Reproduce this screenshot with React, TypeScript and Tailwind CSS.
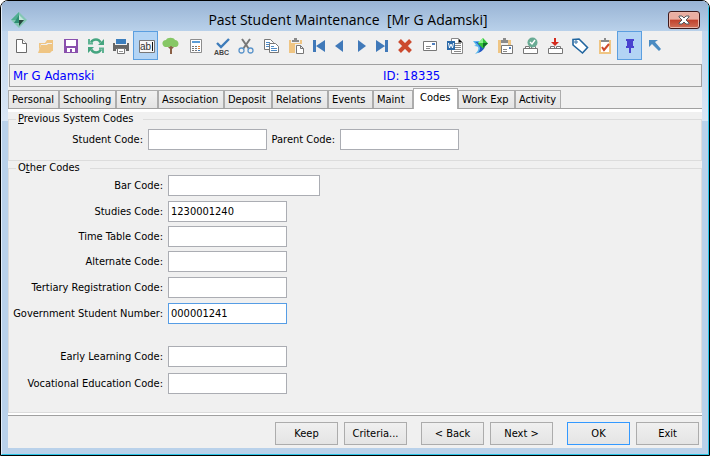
import { useState } from 'react'
import type { ReactNode } from 'react'
import clsx from 'clsx'

interface Tool {
  name: string
  icon: ReactNode
  narrow?: boolean
  pressed?: boolean
}

const TOOLS: Tool[] = [
  {
    name: 'New',
    icon: (
      <g fill="#fff" stroke="#6a6a6a">
        <path d="M8.5 8.5h6l4 4v9h-10z" />
        <path d="M14.5 8.5v4h4" />
      </g>
    ),
  },
  {
    name: 'Open',
    icon: (
      <g fill="#efc583">
        <path d="M6 20V12h6l2-3h6v11h-1v-8h-5l-1 1H8z" />
        <path d="M5 22l3-8h6l1-1h4v7l-2 2z" />
      </g>
    ),
  },
  {
    name: 'Save',
    icon: (
      <g>
        <path fill="#8a50ad" d="M6 8h14v14H6z" />
        <path fill="#fff" d="M8 9h10v6H8zM9 17h8v4h-3v-3h-2v3H9z" />
      </g>
    ),
  },
  {
    name: 'Refresh',
    icon: (
      <g fill="none" stroke="#45a580" strokeWidth="2.4">
        <path d="M8 11.500c2-4 8-4 9.500 0" />
        <path d="M18 18.500c-2 4-8 4-9.500 0" />
        <path fill="#45a580" stroke="none" d="M21 8v6h-6zM5 22v-6h6z" />
        <path stroke="#5fb393" strokeWidth="2" d="M6 8v4.500h4M20 22v-4.500h-4" />
      </g>
    ),
  },
  {
    name: 'Print',
    icon: (
      <g>
        <path fill="#3c7ebd" d="M8 8h10v5H8z" />
        <path fill="#666" d="M5 12h2v2h12v-2h2v8h-3v-2H8v2H5z" />
        <path fill="#fff" stroke="#777" d="M9.5 17.5h7v5h-7z" />
        <path stroke="#999" d="M11 20.500h4" />
      </g>
    ),
  },
  {
    name: 'Edit text',
    pressed: true,
    icon: (
      <g>
        <path fill="#f8f8f8" stroke="#777" d="M6.500 9.500h15v12h-15z" />
        <text x="7" y="19" fontSize="10" fill="#333">ab</text>
        <path stroke="#111" d="M19.500 11v9" />
      </g>
    ),
  },
  {
    name: 'Family tree',
    icon: (
      <g>
        <path fill="#8a6046" d="M12 23v-5l-3-3 1-1 2 2v-3h2v3l2-2 1 1-3 3v5z" />
        <path fill="#86c765" d="M8 9c1-3 8-3 9 0 4 0 5 6 1 7h-3l-2-1-2 1H7c-4-2-3-7 1-7z" />
      </g>
    ),
  },
  {
    name: 'Calculator',
    icon: (
      <g>
        <path fill="#fff" stroke="#8d8d8d" d="M7.500 8.500h11v13h-11z" />
        <path fill="#5d9dd5" d="M9 10h8v2H9z" />
        <path fill="#777" d="M9 15h2v1H9zM12 15h2v1h-2zM9 17h2v1H9zM12 17h2v1h-2zM9 19h2v1H9zM12 19h2v1h-2z" />
        <path fill="#e07f2e" d="M15 15h2v1h-2zM15 17h2v1h-2z" />
        <path fill="#4079b9" d="M15 19h2v1h-2z" />
      </g>
    ),
  },
  {
    name: 'Spelling',
    icon: (
      <g>
        <path fill="none" stroke="#3e7cba" strokeWidth="2.400" d="M9 12l4 4 8-8" />
        <text x="6" y="24" fontSize="7" fontWeight="700" fill="#444">ABC</text>
      </g>
    ),
  },
  {
    name: 'Cut',
    icon: (
      <g fill="none">
        <path stroke="#777" strokeWidth="2" d="M9 8l7 10M17 8l-7 10" />
        <circle cx="8.500" cy="19.500" r="2.500" stroke="#5c95cb" strokeWidth="1.300" />
        <circle cx="17.500" cy="19.500" r="2.500" stroke="#5c95cb" strokeWidth="1.300" />
      </g>
    ),
  },
  {
    name: 'Copy',
    icon: (
      <g fill="#fff">
        <path stroke="#777" d="M6.500 8.500h6l3 3v7h-9z" />
        <path stroke="#4f8bc5" d="M8 11.500h4M8 13.500h3M8 15.500h3" />
        <path stroke="#777" d="M11.500 12.500h6l3 3v6h-9z" />
        <path stroke="#4f8bc5" d="M13 15.500h3M13 17.500h6M13 19.500h6" />
      </g>
    ),
  },
  {
    name: 'Paste',
    icon: (
      <g>
        <path fill="#efc583" d="M6 9h13v13H6z" />
        <path fill="#f0f0f0" d="M8 8h9v4H8z" />
        <path fill="#8a8a8a" d="M9 9h2V7h3v2h2v2H9z" />
        <path fill="#f0f0f0" d="M12 13h8v10h-8z" />
        <path fill="#fff" stroke="#777" d="M13.500 14.500h4l3 3v5h-7zM17.500 14.500v3h3" />
      </g>
    ),
  },
  {
    name: 'First',
    narrow: true,
    icon: <path fill="#4079b9" d="M5 9h3v12H5zM17 9v12l-9-6z" />,
  },
  {
    name: 'Previous',
    narrow: true,
    icon: <path fill="#4079b9" d="M14 9v12l-8-6z" />,
  },
  {
    name: 'Next',
    narrow: true,
    icon: <path fill="#4079b9" d="M8 9v12l8-6z" />,
  },
  {
    name: 'Last',
    narrow: true,
    icon: <path fill="#4079b9" d="M14 9h3v12h-3zM5 9v12l9-6z" />,
  },
  {
    name: 'Delete',
    icon: <path fill="none" stroke="#cc4a2e" strokeWidth="4" d="M7.500 9.500l11 11M18.500 9.500l-11 11" />,
  },
  {
    name: 'Mail',
    icon: (
      <g>
        <path fill="#fff" stroke="#777" d="M6.500 10.500h13v9h-13z" />
        <path fill="#4f7fc0" d="M15 12h3v2h-3z" />
        <path stroke="#888" d="M9 15.500h5M9 17.500h4" />
      </g>
    ),
  },
  {
    name: 'Word document',
    icon: (
      <g>
        <path fill="#fff" stroke="#888" d="M9.500 7.500h7l4 4v11h-11z" />
        <path stroke="#888" d="M13 12.500h6M13 14.500h6M13 16.500h6M13 18.500h6M12 20.500h7M16.500 8v3.500h4" />
        <path fill="#2a69a8" d="M5 10h8v9H5z" />
        <path fill="none" stroke="#fff" d="M6.500 12l1 5 1.500-4 1.500 4 1-5" />
      </g>
    ),
  },
  {
    name: 'Synchronise',
    icon: (
      <g>
        <path fill="#5ab8ec" d="M6 10l6 0 4 6c0 3-4 6-8 7 3-3 4-5 3-7-1-1-3-1-4-1l2-1z" />
        <path fill="#2459c4" d="M8 11c4 0 6 1 8 5l2-1c0 3-4 6-7 7 2-3 3-5 1-7-1-2-2-3-4-4z" />
        <path fill="#35c53b" d="M16 7l5 5.500-5 5-5-5z" />
        <path fill="#8cf08d" d="M16 7v5h-5z" />
        <path fill="#126b2c" d="M16 12h5l-5 5z" />
      </g>
    ),
  },
  {
    name: 'Clipboard mail',
    icon: (
      <g>
        <path fill="#efc583" d="M6 9h3v11h1v2H6zM16 9h3v5h-3z" />
        <path fill="#8a8a8a" d="M9 9h2V7h3v2h2v3H9z" />
        <path fill="#fff" stroke="#777" d="M9.500 14.500h11v8h-11z" />
        <path stroke="#888" d="M11 18.500h4M11 20.500h4" />
        <path fill="#4f7fc0" d="M17 16h2v2h-2z" />
      </g>
    ),
  },
  {
    name: 'Approve',
    icon: (
      <g>
        <path fill="#fff" stroke="#777" d="M6.500 17.500h14v5h-14zM8.500 17.500v-2h4v2M14.500 17.500v-2h4v2" />
        <circle cx="15.500" cy="11.500" r="5" fill="#69ab94" />
        <path fill="none" stroke="#fff" strokeWidth="1.400" d="M13 11l2 2 3-4" />
      </g>
    ),
  },
  {
    name: 'Receive',
    icon: (
      <g>
        <path fill="#fff" stroke="#777" d="M6.500 17.500h14v5h-14zM8.500 17.500v-2h4v2M14.500 17.500v-2h4v2" />
        <path fill="#d42a1c" d="M12 7h2v4h3l-4 4-4-4h3z" />
      </g>
    ),
  },
  {
    name: 'Tag',
    icon: (
      <g>
        <path fill="#fff" stroke="#20659f" strokeWidth="1.600" d="M6 8.500l6-.5 8.500 8.500-5 5.500L6 14z" />
        <circle cx="9" cy="11" r="1.200" fill="none" stroke="#20659f" />
      </g>
    ),
  },
  {
    name: 'Tasks',
    icon: (
      <g>
        <path fill="#efc583" d="M7 9h12v14H7z" />
        <path fill="#fff" d="M9 10h8v11H9z" />
        <path fill="#8a8a8a" d="M9 9h3V7h2v2h3v2H9z" />
        <path fill="none" stroke="#cf4a2c" strokeWidth="2" d="M10 16l2 3 5-6" />
      </g>
    ),
  },
  {
    name: 'Pin',
    pressed: true,
    icon: <path fill="#4a43cf" d="M9 8h8v2h-1v5h1v2h-3v5h-2v-5H9v-2h1v-5H9z" />,
  },
  {
    name: 'Pointer',
    icon: <path fill="#4a8bc2" d="M7 9h9l-3 2 6 7-2 2-7-7-3 3z" />,
  },
]

const TABS = [
  { label: 'Personal', width: 'w-[51px]' },
  { label: 'Schooling', width: 'w-[57px]' },
  { label: 'Entry', width: 'w-[42px]' },
  { label: 'Association', width: 'w-[66px]' },
  { label: 'Deposit', width: 'w-[48px]' },
  { label: 'Relations', width: 'w-[56px]' },
  { label: 'Events', width: 'w-[45px]' },
  { label: 'Maint', width: 'w-[40px]' },
  { label: 'Codes', width: 'w-[45px]' },
  { label: 'Work Exp', width: 'w-[57px]' },
  { label: 'Activity', width: 'w-[46px]' },
]

const OTHER_CODES = [
  { id: 'bar', label: 'Bar Code:', value: '', input: 'w-[152px]', row: '' },
  { id: 'studies', label: 'Studies Code:', value: '1230001240', input: 'w-[119px]', row: 'mt-[5px]' },
  { id: 'timetable', label: 'Time Table Code:', value: '', input: 'w-[119px]', row: 'mt-1' },
  { id: 'alternate', label: 'Alternate Code:', value: '', input: 'w-[119px]', row: 'mt-1' },
  { id: 'tertiary', label: 'Tertiary Registration Code:', value: '', input: 'w-[119px]', row: 'mt-[5px]' },
  { id: 'government', label: 'Government Student Number:', value: '000001241', input: 'w-[119px]', row: 'mt-[5px]', active: true },
  { id: 'early', label: 'Early Learning Code:', value: '', input: 'w-[119px]', row: 'mt-[22px]' },
  { id: 'vocational', label: 'Vocational Education Code:', value: '', input: 'w-[119px]', row: 'mt-[6px]' },
]

function CodeInput({ id, value, className, active }: { id: string; value: string; className: string; active?: boolean }) {
  return (
    <input
      id={id}
      type="text"
      defaultValue={value}
      className={clsx(
        'h-[21px] bg-white border px-[2px] outline-none focus:border-[#569de5]',
        active ? 'border-[#569de5]' : 'border-[#abadb3]',
        className
      )}
    />
  )
}

function PushButton({ children, primary }: { children: ReactNode; primary?: boolean }) {
  return (
    <button
      type="button"
      className={clsx(
        'w-[63px] h-[23px] border bg-linear-to-b from-[#f0f0f0] to-[#e4e4e4]',
        primary ? 'border-[#3399ff]' : 'border-[#acacac]'
      )}
    >
      {children}
    </button>
  )
}

function TitleBar() {
  return (
    <header className="flex items-center h-[30px] px-2 bg-linear-to-b from-[#98b3d4] to-[#b9d1ea]">
      <svg width="18" height="18" viewBox="0 0 18 18" className="mt-2 shrink-0" aria-hidden>
        <path fill="#84c7b4" d="M9 1l8 8-8 8-8-8z" />
        <path fill="#4fae91" d="M9 1v8H1z" />
        <path fill="#2e8f73" d="M9 4v8H4z" />
        <path fill="#27473f" d="M9 9h5l-5 6z" />
        <path fill="#c0e5da" d="M9 4l5 5H9z" />
      </svg>
      <h1 className="flex-1 mt-2 text-center text-[14px] leading-5 whitespace-pre font-['Open_Sans',sans-serif]">
        {'Past Student Maintenance  [Mr G Adamski]'}
      </h1>
      <button
        type="button"
        aria-label="Close"
        className="flex items-center justify-center w-8 h-[18px] mt-2 rounded-[3px] border border-[#3f1a1c] bg-linear-to-b from-[#e9aea2] from-45% via-[#c0402c] via-50% to-[#cf6f58] inset-shadow-[0_0_0_1px_#e9b7ac]"
      >
        <svg width="12" height="10" viewBox="0 0 12 10" aria-hidden>
          <path fill="#fff" stroke="#53595f" d="M1 1h3l2 2 2-2h3v1L8 5l3 3v1H8L6 7 4 9H1V8l3-3-3-3z" />
        </svg>
      </button>
    </header>
  )
}

function Toolbar() {
  return (
    <div role="toolbar" className="flex h-8">
      {TOOLS.map(t => (
        <button
          key={t.name}
          type="button"
          aria-label={t.name}
          className={clsx(
            'h-[29px] shrink-0',
            t.narrow ? 'w-[21px]' : 'w-[25px]',
            t.pressed && 'bg-[#b3d4f4] outline outline-[#5b9fe0] -outline-offset-1'
          )}
        >
          <svg
            width={t.narrow ? 21 : 25}
            height="29"
            viewBox={t.narrow ? '0 0 21 29' : '0 0 25 29'}
            className="block font-['Liberation_Sans',sans-serif]"
            aria-hidden
          >
            {t.icon}
          </svg>
        </button>
      ))}
    </div>
  )
}

export default function App() {
  const [tab, setTab] = useState('Codes')

  return (
    <div className="min-h-screen flex flex-col overflow-hidden rounded-t-lg border border-black bg-[#b9d1ea] font-['DejaVu_Sans_Condensed','Noto_Sans',sans-serif] text-[11px] leading-[14px] text-black">
      <div className="flex-1 flex flex-col border-r border-b border-[#2ac4e6] border-l border-l-[#e3eefa] bg-[linear-gradient(#c2d7ee_30px,#d9e6f5_120px,#b9d1ea_120px)]">
        <TitleBar />

        <main className="flex-1 flex flex-col mx-[6px] mb-[6px] bg-[#f0f0f0]">
          <Toolbar />

          <div className="grid grid-cols-[370px_1fr] items-center h-[23px] mt-px ml-px pl-[3px] border border-[#a0a0a0] text-[13px] leading-5 text-[#0000ff]">
            <span>Mr G Adamski</span>
            <span>ID: 18335</span>
          </div>

          <div role="tablist" className="flex items-end h-[22px] border-b border-[#a0a0a0]">
            {TABS.map(t => (
              <button
                key={t.label}
                type="button"
                role="tab"
                aria-selected={t.label === tab}
                onClick={() => setTab(t.label)}
                className={clsx(
                  'shrink-0 text-left whitespace-nowrap border border-b-0 border-[#acacac]',
                  t.width,
                  t.label === tab
                    ? 'h-[21px] -mb-px pl-[6px] pb-[2px] bg-white'
                    : 'h-[18px] pl-[3px] bg-linear-to-b from-[#f0f0f0] to-[#e4e4e4]'
                )}
              >
                {t.label}
              </button>
            ))}
          </div>

          <form className="flex-1 flex flex-col border-t-[3px] border-b-2 border-white">
            <fieldset className="h-[49px] border border-[#dcdcdc]">
              <legend className="ml-[7px] pl-[2px] pr-[10px]">
                <u>P</u>revious System Codes
              </legend>
              <div className="flex items-center mt-[3px]">
                <label htmlFor="student" className="w-[134px] text-right">Student Code:</label>
                <CodeInput id="student" value="" className="w-[119px] ml-[5px]" />
                <label htmlFor="parent" className="w-[68px] text-right">Parent Code:</label>
                <CodeInput id="parent" value="" className="w-[119px] ml-[5px]" />
              </div>
            </fieldset>

            <fieldset className="flex-1 border border-[#dcdcdc]">
              <legend className="ml-[7px] pl-[2px] pr-[10px]">
                O<u>t</u>her Codes
              </legend>
              {OTHER_CODES.map(c => (
                <div key={c.id} className={clsx('flex items-center', c.row)}>
                  <label htmlFor={c.id} className="w-[154px] text-right whitespace-nowrap">{c.label}</label>
                  <CodeInput id={c.id} value={c.value} active={c.active} className={clsx('ml-[5px]', c.input)} />
                </div>
              ))}
            </fieldset>
          </form>

          <footer className="flex justify-end gap-[14px] pt-[6px] pr-[3px] pb-[3px] border-t border-[#a0a0a0]">
            <div className="flex gap-[6px]">
              <PushButton>Keep</PushButton>
              <PushButton>Criteria...</PushButton>
            </div>
            <div className="flex gap-[6px]">
              <PushButton>&lt; Back</PushButton>
              <PushButton>Next &gt;</PushButton>
            </div>
            <div className="flex gap-[6px]">
              <PushButton primary>OK</PushButton>
              <PushButton>Exit</PushButton>
            </div>
          </footer>
        </main>
      </div>
    </div>
  )
}
